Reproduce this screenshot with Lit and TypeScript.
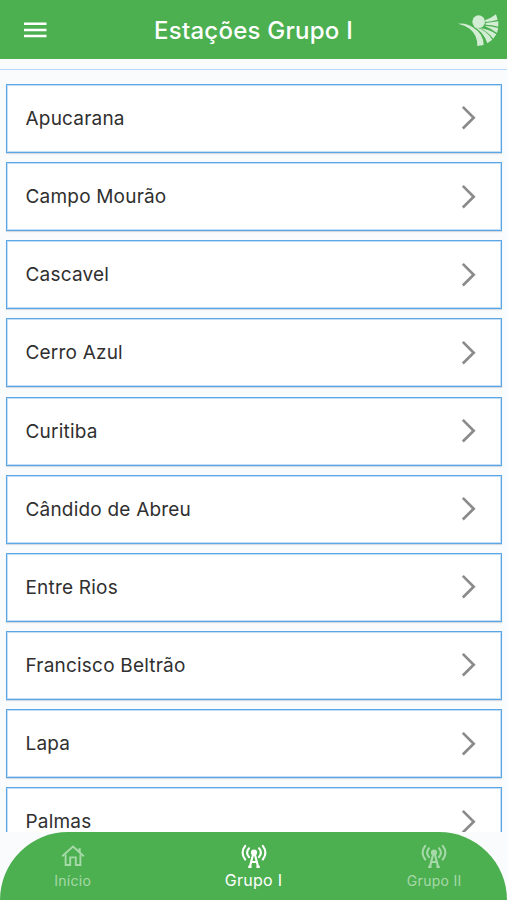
import { LitElement, html, css, svg } from "lit";
import { customElement } from "lit/decorators.js";
import { classMap } from "lit/directives/class-map.js";

const stations = [
  "Apucarana", "Campo Mourão", "Cascavel", "Cerro Azul", "Curitiba",
  "Cândido de Abreu", "Entre Rios", "Francisco Beltrão", "Lapa", "Palmas",
];

const homeIcon = svg`
  <path d="M2.2 12.2 13 2.6 23.8 12.2" fill="none" stroke="currentColor" stroke-width="2"/>
  <path d="M18.4 4.2h2.3v5l-2.3-2z" fill="currentColor"/>
  <path d="M5.6 10.4V21h4.6v-7.6h5.6V21h4.6V10.4" fill="none" stroke="currentColor" stroke-width="1.9"/>`;
const towerIcon = svg`
  <g fill="none" stroke="currentColor" stroke-width="2.1" stroke-linecap="round">
    <path d="M4.2 1.9Q-1 8.7 4.2 15.5M21.8 1.9Q27 8.7 21.8 15.5M8 4.3Q4.2 8.7 8 13.1M18 4.3Q21.8 8.7 18 13.1"/>
  </g>
  <circle cx="13" cy="8.6" r="3.1" fill="currentColor"/>
  <path d="M12.2 10 9 22.5M13.8 10l3.2 12.5M10 18h6M7.2 22.8h3.4M15.4 22.8h3.4" fill="none" stroke="currentColor" stroke-width="2.2"/>`;

const tabs = [
  { label: "Início", icon: homeIcon, active: false },
  { label: "Grupo I", icon: towerIcon, active: true },
  { label: "Grupo II", icon: towerIcon, active: false },
];

@customElement("app-root")
export class AppRoot extends LitElement {
  static styles = css`
    :host {
      display: flex;
      flex-direction: column;
      height: 900px;
      overflow: hidden;
      background: #fafbfc;
      font-family: Inter, Roboto, sans-serif;
      color: #303030;
    }
    * { box-sizing: border-box; }
    svg { display: block; }
    .bar {
      flex: none;
      display: grid;
      grid-template-columns: 70px 1fr 70px;
      align-items: center;
      height: 59.4px;
      padding-top: 1px;
      background: #4caf50;
      color: #fff;
    }
    .menu { margin-left: 24px; }
    .title {
      margin: 0;
      padding-top: 1px;
      text-align: center;
      font-size: 24px;
      font-weight: 500;
      letter-spacing: 0.25px;
      line-height: 30px;
    }
    .logo { margin-left: 19.7px; color: #d2edd3; }
    .divider { flex: none; height: 1px; margin-top: 9.6px; background: #b9d9f8; }
    .list {
      flex: 1;
      min-height: 0;
      overflow: hidden;
      display: flex;
      flex-direction: column;
      gap: 9.15px;
      padding: 14px 5px 0 6px;
    }
    .card {
      flex: none;
      height: 69px;
      display: flex;
      align-items: center;
      justify-content: space-between;
      padding: 0 25.5px 0 18.5px;
      border: 1px solid #5ba7e5;
      background: #fff;
      box-shadow: inset 0 0 0 1px #c3def6, 0 1px 1px rgba(60, 90, 120, 0.2);
      font-size: 19px;
      letter-spacing: 0.2px;
    }
    .tabs {
      flex: none;
      height: 68.5px;
      display: grid;
      grid-template-columns: 145.5px 1fr 145.5px;
      border-radius: 68px 68px 0 0;
      background: #4caf50;
    }
    .tab {
      display: flex;
      flex-direction: column;
      align-items: center;
      padding-top: 12px;
      gap: 3.5px;
      color: #a6d9a8;
      font-size: 14px;
      line-height: 18px;
      letter-spacing: 0.3px;
    }
    .active { color: #fff; font-size: 16px; gap: 2.5px; }
  `;

  render() {
    return html`
      <header class="bar">
        <svg class="menu" width="23" height="16" viewBox="0 0 23 16">
          <path d="M0 1.7h22.5M0 7.9h22.5M0 14.1h22.5" stroke="currentColor" stroke-width="2.5"/>
        </svg>
        <h1 class="title">Estações Grupo I</h1>
        <svg class="logo" width="43.3" height="34" viewBox="0 0 130 102" fill="currentColor">
          <circle cx="65" cy="26" r="19"/>
          <path d="M3 32Q26 28 46 42Q80 62 80 96L61 99Q62 66 38 47Q24 36 3 32Z"/>
          <path d="M48 40Q90 52 106 80L91 91Q80 56 48 40Z"/>
          <path d="M68 45Q98 49 118 64L109 77Q92 55 68 45Z"/>
          <path d="M82 38Q104 39 124 45L120 60Q100 45 82 38Z"/>
          <path d="M86 30L124 25L124 41Q104 35 86 35Z"/>
          <path d="M84 22Q102 16 117 4L122 20Q104 26 86 27Z"/>
        </svg>
      </header>
      <div class="divider"></div>
      <main class="list">
        ${stations.map((name) => html`
          <div class="card">
            <span>${name}</span>
            <svg width="15" height="26" viewBox="0 0 15 26">
              <path d="M1.8 1.9 12.7 12.7 1.8 23.5" fill="none" stroke="#8b8b8b" stroke-width="2.7"/>
            </svg>
          </div>`)}
      </main>
      <nav class="tabs">
        ${tabs.map((t) => html`
          <div class=${classMap({ tab: true, active: t.active })}>
            <svg width="26" height="25" viewBox="0 0 26 25">${t.icon}</svg>
            <span>${t.label}</span>
          </div>`)}
      </nav>
    `;
  }
}
